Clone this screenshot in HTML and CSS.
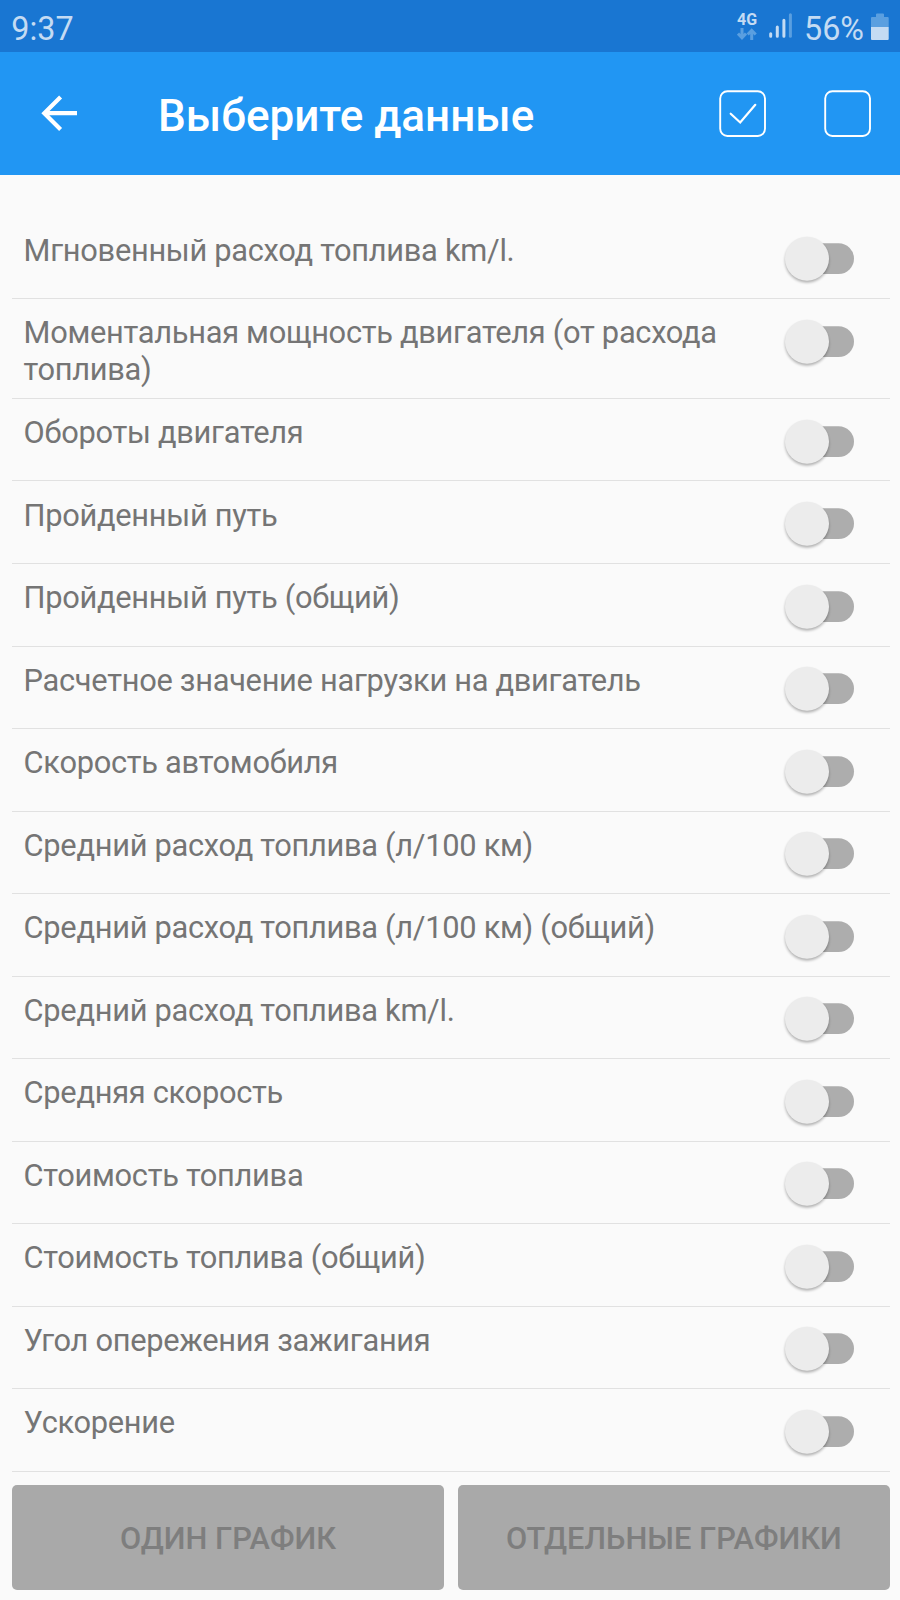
FILE: index.html
```html
<!DOCTYPE html>
<html lang="ru">
<head>
<meta charset="utf-8">
<title>Выберите данные</title>
<link rel="stylesheet" href="styles.css">
</head>
<body>
<svg class="defs" width="0" height="0" aria-hidden="true">
  <defs>
    <filter id="soft" x="-30%" y="-30%" width="160%" height="160%"><feGaussianBlur stdDeviation="1.5"/></filter>
    <symbol id="switch" viewBox="0 0 76 56">
      <rect x="11" y="12.2" width="63" height="30.8" rx="15.4" fill="#adadad"/>
      <circle cx="27" cy="29.6" r="21.8" fill="#000" opacity=".32" filter="url(#soft)"/>
      <circle cx="27" cy="27.7" r="22" fill="#ececec"/>
    </symbol>
  </defs>
</svg>
<div class="screen">
  <div class="status">
    <span class="clock">9:37</span>
    <div class="indicators">
      <div class="network">
        <span class="net-label">4G</span>
        <svg class="net-arrows" width="20" height="12" viewBox="0 0 20 12" fill="none" stroke="#5a9fe0" stroke-width="3"><path d="M5 0V10M1 5.5L5 9.7L9 5.5M14.7 12V2M10.7 6.5L14.7 2.3L18.7 6.5"/></svg>
      </div>
      <svg class="signal" width="24" height="26" viewBox="0 0 24 26" stroke-width="3" stroke-linecap="round"><path stroke="#c4dbf3" d="M1.7 20.7V23.3M8.3 14V23.3M14.9 7.3V23.3"/><path stroke="#5a9fe0" d="M21.4 1.7V23.3"/></svg>
      <span class="percent">56%</span>
      <svg class="battery" width="18" height="28" viewBox="0 0 18 28"><path fill="#5a9fe0" d="M5 4V1.5Q5 .5 6 .5H12Q13 .5 13 1.5V4H16.7Q17.7 4 17.7 5V14H0V5Q0 4 1 4Z"/><path fill="#c4dbf3" d="M0 14H17.7V26Q17.7 27 16.7 27H1Q0 27 0 26Z"/></svg>
    </div>
  </div>
  <header class="toolbar">
    <svg class="back" width="38" height="38" viewBox="0 0 38 38" fill="none" stroke="#fff" stroke-width="4.2"><path d="M37 18.2H4.6M20.6 1.9L4.3 18.2L20.6 34.5"/></svg>
    <h1 class="title">Выберите данные</h1>
    <div class="actions">
      <svg width="48" height="48" viewBox="0 0 48 48" fill="none" stroke="#fff" stroke-width="1.9"><rect x="1.2" y="1.2" width="44.8" height="44.8" rx="7.2"/><path stroke-width="2.2" stroke-linecap="round" d="M11.7 23.7L21.2 32.5L36.3 14.8"/></svg>
      <svg width="48" height="48" viewBox="0 0 48 48" fill="none" stroke="#fff" stroke-width="1.9"><rect x="1.2" y="1.2" width="44.8" height="44.8" rx="7.2"/></svg>
    </div>
  </header>
  <main class="list">
    <div class="row"><span class="label">Мгновенный расход топлива km/l.</span><svg class="switch"><use href="#switch"/></svg></div>
    <div class="row tall"><span class="label">Моментальная мощность двигателя (от расхода топлива)</span><svg class="switch"><use href="#switch"/></svg></div>
    <div class="row"><span class="label">Обороты двигателя</span><svg class="switch"><use href="#switch"/></svg></div>
    <div class="row"><span class="label">Пройденный путь</span><svg class="switch"><use href="#switch"/></svg></div>
    <div class="row"><span class="label">Пройденный путь (общий)</span><svg class="switch"><use href="#switch"/></svg></div>
    <div class="row"><span class="label">Расчетное значение нагрузки на двигатель</span><svg class="switch"><use href="#switch"/></svg></div>
    <div class="row"><span class="label">Скорость автомобиля</span><svg class="switch"><use href="#switch"/></svg></div>
    <div class="row"><span class="label">Средний расход топлива (л/100 км)</span><svg class="switch"><use href="#switch"/></svg></div>
    <div class="row"><span class="label">Средний расход топлива (л/100 км) (общий)</span><svg class="switch"><use href="#switch"/></svg></div>
    <div class="row"><span class="label">Средний расход топлива km/l.</span><svg class="switch"><use href="#switch"/></svg></div>
    <div class="row"><span class="label">Средняя скорость</span><svg class="switch"><use href="#switch"/></svg></div>
    <div class="row"><span class="label">Стоимость топлива</span><svg class="switch"><use href="#switch"/></svg></div>
    <div class="row"><span class="label">Стоимость топлива (общий)</span><svg class="switch"><use href="#switch"/></svg></div>
    <div class="row"><span class="label">Угол опережения зажигания</span><svg class="switch"><use href="#switch"/></svg></div>
    <div class="row"><span class="label">Ускорение</span><svg class="switch"><use href="#switch"/></svg></div>
  </main>
  <footer class="buttons">
    <button class="button" disabled>ОДИН ГРАФИК</button>
    <button class="button" disabled>ОТДЕЛЬНЫЕ ГРАФИКИ</button>
  </footer>
</div>
</body>
</html>
```

FILE: styles.css
```css
* { box-sizing: border-box; }
body { margin: 0; background: #fafafa; font-family: Roboto, "Liberation Sans", sans-serif; }
svg { display: block; flex: none; }
.defs { position: absolute; }
.screen { width: 900px; height: 1600px; display: flex; flex-direction: column; overflow: hidden; }

.status { height: 52px; background: #1976d2; color: #c4dbf3; display: flex; justify-content: space-between; padding: 0 11px 0 11.3px; font-size: 32.3px; line-height: 38px; }
.clock, .percent { padding-top: 10px; white-space: nowrap; }
.indicators { display: flex; }
.network { width: 20px; margin-right: 12px; padding-top: 11px; }
.net-label { display: block; height: 17px; font-size: 16px; line-height: 17px; font-weight: 700; }
.signal { margin: 13px 11px 0 0; }
.percent { width: 60px; margin-right: 7px; }
.battery { margin-top: 13px; }

.toolbar { height: 123px; background: #2196f3; color: #fff; display: flex; padding: 0 28px 0 40px; }
.back { margin-top: 43px; }
.title { margin: 38px 0 0 80px; font-size: 44px; line-height: 52px; font-weight: 500; white-space: nowrap; }
.actions { margin: 38px 0 0 auto; display: flex; gap: 57px; }

.list { padding: 41.45px 10px 0 12px; }
.row { height: 82.52px; display: flex; justify-content: space-between; padding: 15px 34px 0 11.6px; border-bottom: 1px solid #e1e1e1; }
.row.tall { height: 100px; }
.label { width: 720px; padding-top: 1.3px; font-size: 30.8px; letter-spacing: -.29px; line-height: 36.3px; color: #757575; }
.switch { width: 76px; height: 56px; margin-top: -.3px; }

.buttons { display: grid; grid-template-columns: 1fr 1fr; gap: 13.5px; padding: 13.1px 10px 0 12px; }
.button { height: 105px; border: 0; border-radius: 5px; padding: 2px 0 0; background: #a9a9a9; color: #7e7e7e; font-family: inherit; font-size: 30.8px; font-weight: 500; }
```
